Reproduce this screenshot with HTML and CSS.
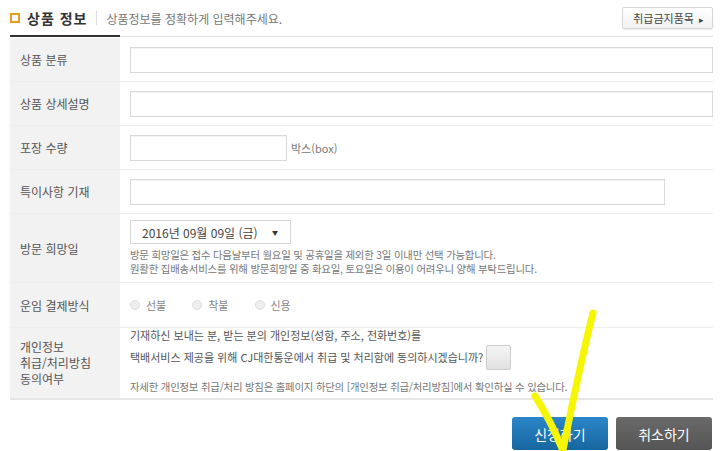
FILE: index.html
```html
<!DOCTYPE html>
<html lang="ko">
<head>
  <meta charset="UTF-8">
  <title>상품 정보</title>
  <link rel="stylesheet" href="styles.css">
</head>
<body>
  <div class="page">
    <div class="head">
      <h2 class="title"><span class="mark"></span>상품 정보</h2>
      <span class="sub">상품정보를 정확하게 입력해주세요.</span>
      <button class="ban-btn">취급금지품목 <span class="tri">▸</span></button>
    </div>

    <div class="form">
      <div class="row">
        <div class="label">상품 분류</div>
        <div class="cell"><input class="field full"></div>
      </div>
      <div class="row">
        <div class="label">상품 상세설명</div>
        <div class="cell"><input class="field full"></div>
      </div>
      <div class="row">
        <div class="label">포장 수량</div>
        <div class="cell"><input class="field short"><span class="unit">박스(box)</span></div>
      </div>
      <div class="row">
        <div class="label">특이사항 기재</div>
        <div class="cell"><input class="field wide"></div>
      </div>
      <div class="row tall">
        <div class="label">방문 희망일</div>
        <div class="cell stack">
          <div class="select">2016년 09월 09일 (금)<span class="arrow">▼</span></div>
          <p class="help">방문 희망일은 접수 다음날부터 월요일 및 공휴일을 제외한 3일 이내만 선택 가능합니다.<br>원활한 집배송서비스를 위해 방문희망일 중 화요일, 토요일은 이용이 어려우니 양해 부탁드립니다.</p>
        </div>
      </div>
      <div class="row pay">
        <div class="label">운임 결제방식</div>
        <div class="cell radios">
          <label><span class="radio"></span>선불</label>
          <label><span class="radio"></span>착불</label>
          <label><span class="radio"></span>신용</label>
        </div>
      </div>
      <div class="row privacy">
        <div class="label">개인정보<br>취급/처리방침<br>동의여부</div>
        <div class="cell stack">
          <p class="agree">기재하신 보내는 분, 받는 분의 개인정보(성함, 주소, 전화번호)를<br>택배서비스 제공을 위해 CJ대한통운에서 취급 및 처리함에 동의하시겠습니까?<span class="check"></span></p>
          <p class="help note">자세한 개인정보 취급/처리 방침은 홈페이지 하단의 [개인정보 취급/처리방침]에서 확인하실 수 있습니다.</p>
        </div>
      </div>
    </div>

    <div class="actions">
      <button class="btn submit">신청하기</button>
      <button class="btn cancel">취소하기</button>
    </div>

    <svg class="scribble" width="720" height="451" viewBox="0 0 720 451">
      <path d="M535 396 C544 410 554 428 563 451 M563 450 C571 410 581 360 593 313" fill="none" stroke="#f6f600" stroke-width="7" stroke-linecap="round"/>
    </svg>
  </div>
</body>
</html>
```

FILE: styles.css
```css
body {
  margin: 0;
  background: #fff;
  font-family: "Noto Sans CJK KR", "Noto Sans", sans-serif;
  color: #555;
}
.page {
  position: relative;
  width: 720px;
  height: 451px;
  overflow: hidden;
}
.head {
  display: flex;
  align-items: center;
  height: 36px;
  margin: 0 7px 0 10px;
  border-bottom: 1px solid #e2e2e2;
  position: relative;
}
.head::after {
  content: "";
  position: absolute;
  left: 0;
  bottom: -1px;
  width: 110px;
  height: 2px;
  background: #333;
}
.title {
  display: flex;
  align-items: center;
  margin: 0;
  font-size: 14px;
  font-weight: bold;
  color: #333;
  letter-spacing: 1px;
  padding-right: 9px;
  border-right: 1px solid #ddd;
  line-height: 14px;
}
.mark {
  width: 6px;
  height: 6px;
  border: 2px solid #e89a1e;
  margin-right: 7px;
}
.sub {
  margin-left: 9px;
  font-size: 12px;
  color: #777;
}
.ban-btn {
  margin-left: auto;
  height: 22px;
  padding: 0 8px 0 10px;
  border: 1px solid #d6d6d6;
  border-radius: 2px;
  background: linear-gradient(#fff, #f1f1f1);
  font-family: inherit;
  font-size: 11px;
  color: #444;
  box-shadow: 0 1px 1px rgba(0, 0, 0, 0.08);
}
.tri {
  font-size: 9px;
  margin-left: 2px;
}
.form {
  margin: 1px 7px 0 10px;
  border-bottom: 2px solid #e6e6e6;
}
.row {
  display: flex;
  height: 43px;
  border-bottom: 1px solid #ededed;
}
.row:last-child {
  border-bottom: none;
}
.label {
  width: 110px;
  flex-shrink: 0;
  box-sizing: border-box;
  padding-left: 10px;
  display: flex;
  align-items: center;
  background: #f2f2f2;
  font-size: 12px;
  color: #555;
}
.cell {
  flex: 1;
  display: flex;
  align-items: center;
  padding-left: 10px;
}
.field {
  height: 26px;
  box-sizing: border-box;
  border: 1px solid #d9d9d9;
  box-shadow: inset 0 1px 1px rgba(0, 0, 0, 0.05);
}
.full {
  width: 583px;
}
.short {
  width: 157px;
}
.wide {
  width: 535px;
}
.unit {
  margin-left: 4px;
  font-size: 11px;
  color: #777;
}
.tall {
  height: 68px;
}
.pay {
  height: 44px;
}
.stack {
  flex-direction: column;
  align-items: flex-start;
  justify-content: center;
}
.select {
  width: 161px;
  height: 24px;
  box-sizing: border-box;
  border: 1px solid #d6d6d6;
  padding-left: 11px;
  display: flex;
  align-items: center;
  font-size: 12px;
  color: #444;
}
.arrow {
  font-size: 6px;
  margin-left: auto;
  margin-right: 12px;
  color: #333;
}
.help {
  margin: 4px 0 0;
  font-size: 10.4px;
  line-height: 14px;
  color: #777;
  letter-spacing: -0.2px;
}
.radios {
  gap: 26px;
}
.radios label {
  display: flex;
  align-items: center;
  font-size: 11px;
  color: #888;
}
.radio {
  width: 8px;
  height: 8px;
  border: 1px solid #ddd;
  border-radius: 50%;
  background: #eee;
  margin-right: 6px;
}
.privacy {
  height: 70px;
}
.privacy .label {
  line-height: 16px;
}
.privacy .stack {
  justify-content: flex-start;
}
.agree {
  margin: -2px 0 0;
  font-size: 11px;
  line-height: 19px;
  color: #555;
}
.check {
  display: inline-block;
  width: 23px;
  height: 23px;
  margin-left: 3px;
  vertical-align: -8px;
  border: 1px solid #ccc;
  border-radius: 2px;
  background: linear-gradient(#f4f4f4, #e2e2e2);
}
.note {
  margin-top: 10px;
}
.actions {
  display: flex;
  justify-content: flex-end;
  gap: 8px;
  margin: 17px 8px 0 0;
}
.btn {
  width: 96px;
  height: 33px;
  border: none;
  border-radius: 3px;
  font-family: inherit;
  font-size: 14px;
  color: #fff;
}
.submit {
  background: linear-gradient(#2a86c9, #17669f);
}
.cancel {
  background: linear-gradient(#6a6a6a, #555);
}
.scribble {
  position: absolute;
  left: 0;
  top: 0;
  pointer-events: none;
}
```
